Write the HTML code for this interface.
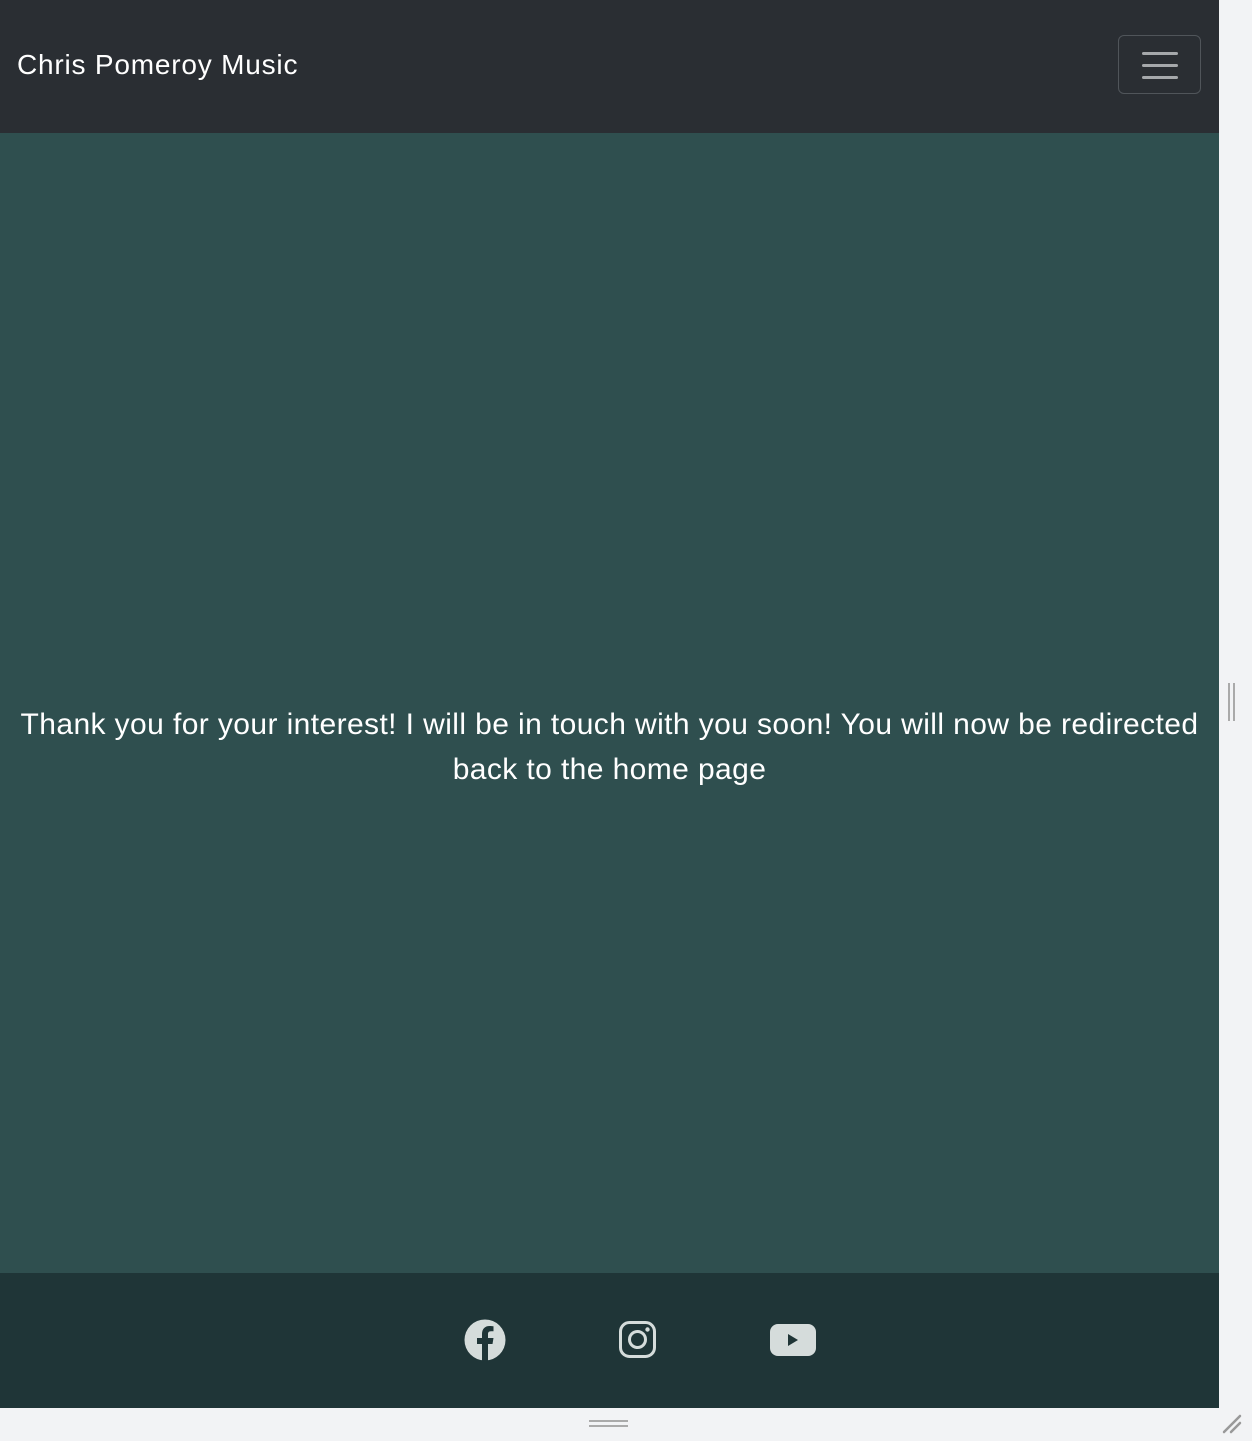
<!DOCTYPE html>
<html><head><style>
html,body{margin:0;padding:0;width:1252px;height:1441px;overflow:hidden;background:#f2f3f5;font-family:"Liberation Sans",sans-serif}
.page{position:absolute;left:0;top:0;width:1219px;height:1408px}
nav{position:absolute;left:0;top:0;width:1219px;height:133px;background:#2a2e33}
.brand{position:absolute;left:17px;top:47px;color:#fff;font-size:28px;line-height:36px;white-space:nowrap;letter-spacing:0.8px}
.tog{position:absolute;left:1118px;top:35px;width:83px;height:59px;border:1px solid #50555a;border-radius:6px;box-sizing:border-box}
.tog i{position:absolute;left:23px;width:36px;height:3px;background:#a5a8ab;border-radius:2px}
main{position:absolute;left:0;top:133px;width:1219px;height:1140px;background:#2f4f4f}
.msg{position:absolute;left:0;top:569px;width:1219px;text-align:center;color:#fff;font-size:30px;letter-spacing:0.4px;line-height:45px;white-space:nowrap}
footer{position:absolute;left:0;top:1273px;width:1219px;height:135px;background:#1f3537}
.ic{position:absolute;top:46px}
.vb{position:absolute;left:1228px;top:683px;width:2px;height:38px;background:#aaa;box-shadow:5px 0 0 #aaa}
.hb{position:absolute;left:589px;top:1420px;width:39px;height:2px;background:#aaa;box-shadow:0 5px 0 #aaa}
</style></head><body>
<div class="page">
<nav><div class="brand">Chris Pomeroy Music</div>
<div class="tog"><i style="top:16px"></i><i style="top:28px"></i><i style="top:40px"></i></div></nav>
<main><div class="msg">Thank you for your interest! I will be in touch with you soon! You will now be redirected<br>back to the home page</div></main>
<footer>
<svg class="ic" style="left:464px" width="42" height="42" viewBox="0 0 42 42"><circle cx="21" cy="21" r="20.5" fill="#d5dcdb"/><path d="M18 42V25h-5v-6h5v-4c0-5 3-8 7.5-8 2 0 4 .3 4 .3v5h-2.5c-2.5 0-3 1.4-3 3V19h5.5l-1 6H24v17z" fill="#1f3537"/></svg>
<svg class="ic" style="left:618px;top:47px" width="40" height="40" viewBox="0 0 40 40"><rect x="2.5" y="2.5" width="34" height="34" rx="9" fill="none" stroke="#d5dcdb" stroke-width="3"/><circle cx="19.5" cy="19.5" r="8" fill="none" stroke="#d5dcdb" stroke-width="3"/><circle cx="29.5" cy="9.5" r="2.2" fill="#d5dcdb"/></svg>
<svg class="ic" style="left:770px;top:51px" width="46" height="32" viewBox="0 0 46 32"><rect x="0" y="0" width="46" height="32" rx="8" fill="#d5dcdb"/><path d="M18 10v12l10-6z" fill="#1f3537"/></svg>
</footer>
</div>
<div class="vb"></div><div class="hb"></div>
<svg style="position:absolute;left:1222px;top:1412px" width="22" height="22"><path d="M2 20L18 4M9 20L18 11" stroke="#999" stroke-width="2.5" stroke-linecap="round"/></svg>
</body></html>
